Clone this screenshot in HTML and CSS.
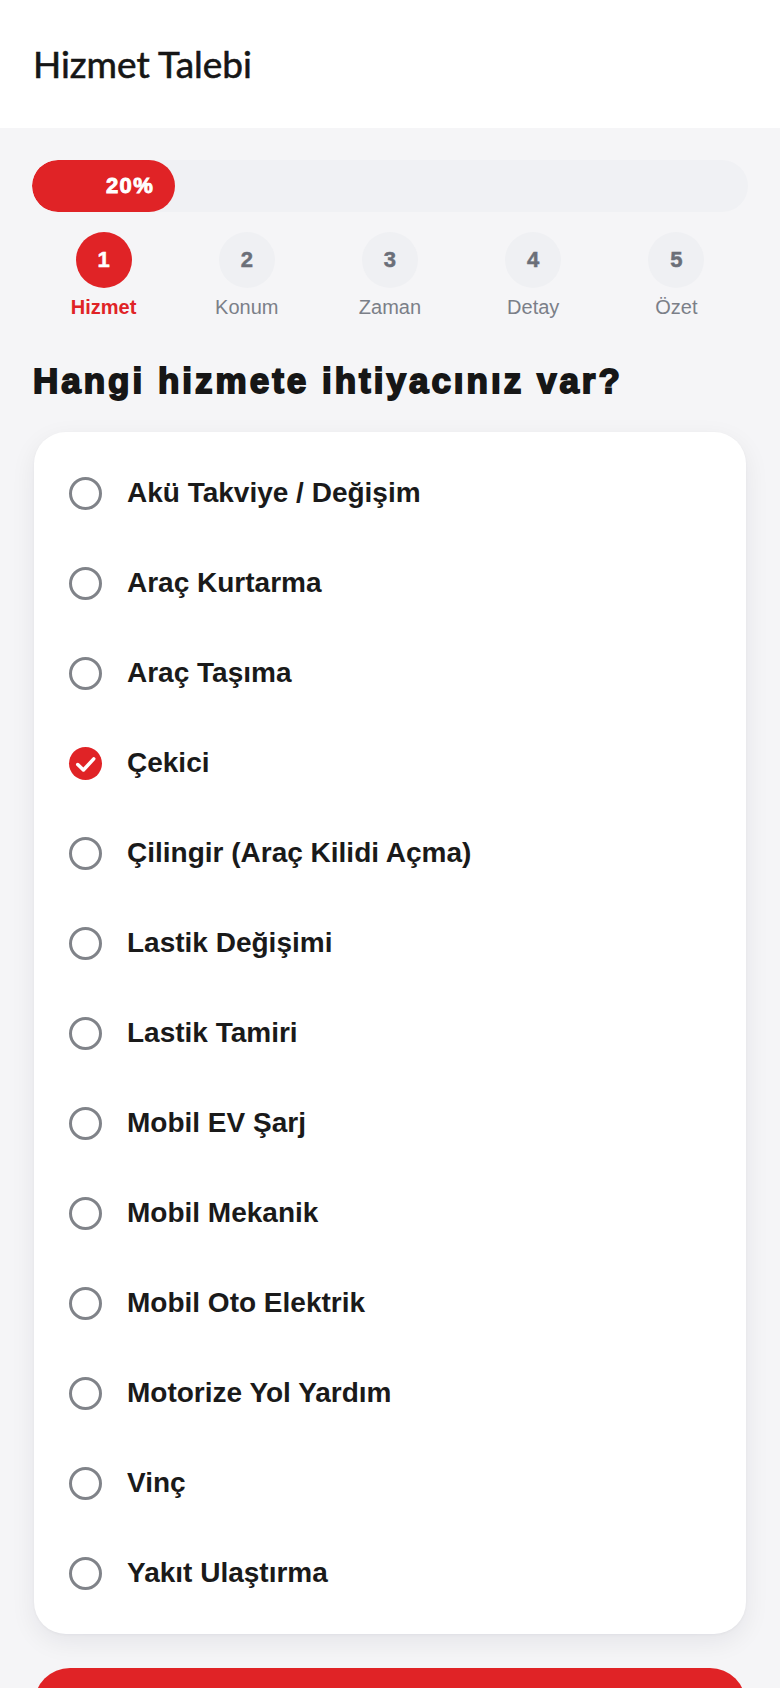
FILE: index.html
```html
<!DOCTYPE html>
<html lang="tr">
<head>
<meta charset="utf-8">
<meta name="viewport" content="width=device-width, initial-scale=1">
<title>Hizmet Talebi</title>
<link rel="stylesheet" href="styles.css">
</head>
<body>
<header class="topbar">
  <h1 class="title">Hizmet Talebi</h1>
</header>
<main class="content">
  <div class="progress">
    <div class="progress-fill" style="width:20%"><span class="progress-text">20%</span></div>
  </div>
  <ol class="steps">
    <li class="step active"><span class="step-num">1</span><span class="step-label">Hizmet</span></li>
    <li class="step"><span class="step-num">2</span><span class="step-label">Konum</span></li>
    <li class="step"><span class="step-num">3</span><span class="step-label">Zaman</span></li>
    <li class="step"><span class="step-num">4</span><span class="step-label">Detay</span></li>
    <li class="step"><span class="step-num">5</span><span class="step-label">Özet</span></li>
  </ol>
  <h2 class="question">Hangi hizmete ihtiyacınız var?</h2>
  <ul class="options">
    <li class="option"><span class="radio"></span><span class="option-label">Akü Takviye / Değişim</span></li>
    <li class="option"><span class="radio"></span><span class="option-label">Araç Kurtarma</span></li>
    <li class="option"><span class="radio"></span><span class="option-label">Araç Taşıma</span></li>
    <li class="option selected"><span class="radio"><svg class="check" viewBox="0 0 32 32" aria-hidden="true"><path d="M8.5 17 L14 22.3 L24 11.5" fill="none" stroke="#fff" stroke-width="3.4" stroke-linecap="round" stroke-linejoin="round"/></svg></span><span class="option-label">Çekici</span></li>
    <li class="option"><span class="radio"></span><span class="option-label">Çilingir (Araç Kilidi Açma)</span></li>
    <li class="option"><span class="radio"></span><span class="option-label">Lastik Değişimi</span></li>
    <li class="option"><span class="radio"></span><span class="option-label">Lastik Tamiri</span></li>
    <li class="option"><span class="radio"></span><span class="option-label">Mobil EV Şarj</span></li>
    <li class="option"><span class="radio"></span><span class="option-label">Mobil Mekanik</span></li>
    <li class="option"><span class="radio"></span><span class="option-label">Mobil Oto Elektrik</span></li>
    <li class="option"><span class="radio"></span><span class="option-label">Motorize Yol Yardım</span></li>
    <li class="option"><span class="radio"></span><span class="option-label">Vinç</span></li>
    <li class="option"><span class="radio"></span><span class="option-label">Yakıt Ulaştırma</span></li>
  </ul>
  <button class="next" type="button">Devam Et</button>
</main>
</body>
</html>
```
FILE: styles.css
```css
* { box-sizing: border-box; }

html, body {
  margin: 0;
  padding: 0;
  background: #f5f5f7;
  font-family: "Liberation Sans", Arial, sans-serif;
  color: #161616;
}

.topbar {
  height: 128px;
  background: #ffffff;
  display: flex;
  align-items: center;
  padding: 0 33px;
}

.title {
  margin: 0;
  font-family: Lato, "Noto Sans", sans-serif;
  font-weight: 400;
  font-size: 37px;
  line-height: 44px;
  color: #161616;
  -webkit-text-stroke: 0.6px #161616;
}

.content {
  padding: 32px 32px 40px;
}

.progress {
  height: 52px;
  border-radius: 26px;
  background: #f0f1f4;
  overflow: hidden;
}

.progress-fill {
  height: 100%;
  border-radius: 26px;
  background: #e02326;
  display: flex;
  align-items: center;
  justify-content: flex-end;
  padding-right: 21px;
}

.progress-text {
  color: #ffffff;
  font-weight: 700;
  font-size: 22px;
  letter-spacing: 1.4px;
  -webkit-text-stroke: 0.9px #ffffff;
}

.steps {
  list-style: none;
  margin: 20px 0 0;
  padding: 0;
  display: grid;
  grid-template-columns: repeat(5, 1fr);
}

.step {
  display: flex;
  flex-direction: column;
  align-items: center;
}

.step-num {
  width: 56px;
  height: 56px;
  border-radius: 50%;
  background: #eff0f3;
  color: #6b6f78;
  display: flex;
  align-items: center;
  justify-content: center;
  font-weight: 700;
  font-size: 22px;
  -webkit-text-stroke: 0.5px currentColor;
}

.step-label {
  margin-top: 7px;
  font-size: 20px;
  line-height: 24px;
  color: #7b7f88;
}

.step.active .step-num {
  background: #e02326;
  color: #ffffff;
}

.step.active .step-label {
  color: #e02326;
  font-weight: 700;
}

.question {
  margin: 41px 0 30px 1px;
  font-size: 35px;
  line-height: 42px;
  font-weight: 700;
  letter-spacing: 3px;
  -webkit-text-stroke: 1.8px #161616;
  color: #161616;
}

.options {
  list-style: none;
  margin: 0 2px;
  padding: 16px 0;
  background: #ffffff;
  border-radius: 32px;
  box-shadow: 0 8px 26px rgba(20, 20, 40, 0.07), 0 1px 3px rgba(20, 20, 40, 0.04);
}

.option {
  height: 90px;
  display: flex;
  align-items: center;
  gap: 25px;
  padding: 0 35px;
}

.radio {
  width: 33px;
  height: 33px;
  flex: none;
  border-radius: 50%;
  border: 3px solid #808389;
  display: flex;
  align-items: center;
  justify-content: center;
}

.option.selected .radio {
  border: none;
  background: #e02326;
}

.check {
  width: 33px;
  height: 33px;
  display: block;
}

.option-label {
  font-size: 28px;
  font-weight: 700;
  line-height: 34px;
  color: #1a1a1a;
}

.next {
  display: block;
  width: calc(100% - 4px);
  margin: 34px 2px 0;
  height: 72px;
  border: none;
  border-radius: 36px;
  background: #e02326;
  color: #ffffff;
  font-family: "Liberation Sans", Arial, sans-serif;
  font-size: 26px;
  font-weight: 700;
}
```
